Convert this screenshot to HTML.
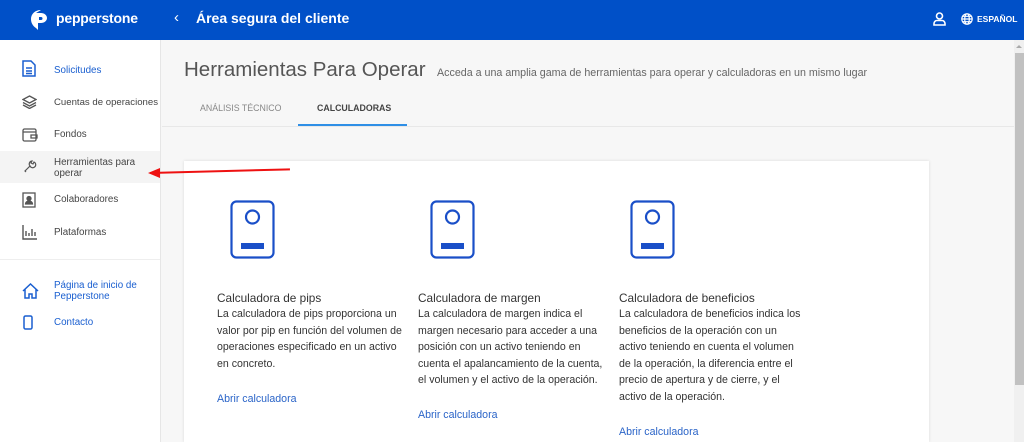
<!DOCTYPE html>
<html style="overflow:hidden"><head><meta charset="utf-8"><style>
*{margin:0;padding:0;box-sizing:border-box}
html,body{width:1024px;height:442px;overflow:hidden}
body{font-family:"Liberation Sans",sans-serif;background:#f7f7f7;position:relative}
.hdr{position:absolute;left:0;top:0;width:1024px;height:40px;background:#0050c8;color:#fff}
.side{position:absolute;left:0;top:40px;width:161px;height:402px;background:#fff;border-right:1px solid #e6e6e6}
.it{position:absolute;left:54px;font-size:9.8px;color:#444;line-height:11px;white-space:nowrap}
.blue{color:#1a5fd0}
.ic{position:absolute;left:22px}
.card{position:absolute;left:184px;top:161px;width:745px;height:281px;background:#fff;box-shadow:0 0 3px rgba(0,0,0,.12)}
.col{position:absolute;top:0;width:195px}
.col h3{font-weight:normal;font-size:11.8px;color:#333;position:absolute;top:130px;left:0;white-space:nowrap}
.col p{position:absolute;top:145px;left:0;font-size:10.6px;line-height:16.6px;color:#333;width:194px}
.col a{position:absolute;font-size:10.6px;color:#2a64c8;white-space:nowrap}
</style></head><body>
<div class="hdr">
 <svg style="position:absolute;left:30px;top:9px" width="22" height="22" viewBox="0 0 22 22"><path d="M11 1C5 1 1 5 1 10c0 4 2 7 5 9l2 2V14h3c3 0 6-2 6-5s-3-5-6-5H6" fill="#fff"/><path d="M9 8h2a1.5 1.5 0 010 3H9z" fill="#0050c8"/></svg>
 <div style="position:absolute;left:56px;top:10px;font-size:14px;font-weight:bold;letter-spacing:-.2px">pepperstone</div>
 <div style="position:absolute;left:174px;top:9px;font-size:15px">&#8249;</div>
 <div style="position:absolute;left:196px;top:10px;font-size:14px;font-weight:bold">Área segura del cliente</div>
 <svg style="position:absolute;left:933px;top:12px" width="13" height="14" viewBox="0 0 13 14" fill="none" stroke="#fff" stroke-width="1.6"><circle cx="6.5" cy="4" r="3"/><path d="M1 13v-1.5a3 3 0 013-3h5a3 3 0 013 3V13z"/></svg>
 <svg style="position:absolute;left:961px;top:13px" width="12" height="12" viewBox="0 0 12 12" fill="none" stroke="#fff" stroke-width="1.2"><circle cx="6" cy="6" r="5.2"/><ellipse cx="6" cy="6" rx="2.3" ry="5.2"/><path d="M1 6h10M2 3.3h8M2 8.7h8"/></svg>
 <div style="position:absolute;left:977px;top:14px;font-size:8.5px;font-weight:bold">ESPAÑOL</div>
</div>
<div class="side">
 <svg class="ic" style="top:20px" width="14" height="17" viewBox="0 0 14 17" fill="none" stroke="#1a5fd0" stroke-width="1.5"><path d="M1 1h8l4 4v11H1z M4 8h6M4 11h6M4 13.5h6"/></svg>
 <div class="it blue" style="top:25px">Solicitudes</div>
 <svg class="ic" style="top:55px" width="15" height="14" viewBox="0 0 15 14" fill="none" stroke="#555" stroke-width="1.3"><path d="M7.5 1L14 4.5 7.5 8 1 4.5z M1 7.5L7.5 11 14 7.5 M1 10L7.5 13.5 14 10"/></svg>
 <div class="it" style="top:57px;font-size:9.6px">Cuentas de operaciones</div>
 <svg class="ic" style="top:87px" width="16" height="15" viewBox="0 0 16 15" fill="none" stroke="#555" stroke-width="1.3"><rect x="1" y="2" width="13" height="12" rx="1.5"/><path d="M1 5h13M9 8h6v3H9z"/></svg>
 <div class="it" style="top:89px">Fondos</div>
 <div style="position:absolute;left:0;top:111px;width:160px;height:32px;background:#f4f4f4"></div>
 <svg class="ic" style="top:119px" width="15" height="15" viewBox="0 0 15 15" fill="none" stroke="#555" stroke-width="1.2"><path d="M3 12l5-5a3 3 0 104-4l-1 2-2-1 1-2a3 3 0 00-2 5L3 12l1 1z"/></svg>
 <div class="it" style="top:117px">Herramientas para<br>operar</div>
 <svg class="ic" style="top:152px" width="15" height="16" viewBox="0 0 15 16" fill="none" stroke="#555" stroke-width="1.3"><rect x="1" y="1" width="12" height="14"/><circle cx="7" cy="6.5" r="2" fill="#555"/><path d="M3.5 12a3.5 3 0 017 0z" fill="#555"/></svg>
 <div class="it" style="top:154px">Colaboradores</div>
 <svg class="ic" style="top:185px" width="15" height="15" viewBox="0 0 15 15" fill="none" stroke="#555" stroke-width="1.4"><path d="M1 0v14h14M4 11V6M7 11V8M10 11V4M13 11V7"/></svg>
 <div class="it" style="top:187px">Plataformas</div>
 <div style="position:absolute;left:0;top:219px;width:160px;height:1px;background:#eee"></div>
 <svg class="ic" style="top:243px" width="17" height="16" viewBox="0 0 17 16" fill="none" stroke="#1a5fd0" stroke-width="1.5"><path d="M1 8L8.5 1 16 8M3 6.5V15h4v-4h3v4h4V6.5"/></svg>
 <div class="it blue" style="top:240px">Página de inicio de<br>Pepperstone</div>
 <svg class="ic" style="top:275px" width="12" height="15" viewBox="0 0 12 15" fill="none" stroke="#1a5fd0" stroke-width="1.5"><rect x="2" y="1" width="8" height="13" rx="1.5"/></svg>
 <div class="it blue" style="top:277px">Contacto</div>
</div>
<div style="position:absolute;left:184px;top:58px;font-size:20.5px;color:#555">Herramientas Para Operar</div>
<div style="position:absolute;left:437px;top:67px;font-size:10.7px;color:#666;white-space:nowrap">Acceda a una amplia gama de herramientas para operar y calculadoras en un mismo lugar</div>
<div style="position:absolute;left:200px;top:103px;font-size:8.8px;color:#888">ANÁLISIS TÉCNICO</div>
<div style="position:absolute;left:317px;top:103px;font-size:8.8px;color:#444;font-weight:bold">CALCULADORAS</div>
<div style="position:absolute;left:298px;top:124px;width:109px;height:2px;background:#2f8fe6"></div>
<div style="position:absolute;left:162px;top:126px;width:852px;height:1px;background:#e8e8e8"></div>
<div class="card">
 <div class="col" style="left:33px">
  <svg style="position:absolute;left:13px;top:39px" width="45" height="59" viewBox="0 0 45 59" fill="none" stroke="#1a4fc8" stroke-width="2.2"><rect x="1.5" y="1.5" width="42" height="56" rx="5"/><circle cx="22.5" cy="17" r="6.5"/><rect x="11" y="43" width="23" height="6" fill="#1a4fc8" stroke="none"/></svg>
  <h3>Calculadora de pips</h3>
  <p>La calculadora de pips proporciona un valor por pip en función del volumen de operaciones especificado en un activo en concreto.</p>
  <a style="top:232px">Abrir calculadora</a>
 </div>
 <div class="col" style="left:234px">
  <svg style="position:absolute;left:12px;top:39px" width="45" height="59" viewBox="0 0 45 59" fill="none" stroke="#1a4fc8" stroke-width="2.2"><rect x="1.5" y="1.5" width="42" height="56" rx="5"/><circle cx="22.5" cy="17" r="6.5"/><rect x="11" y="43" width="23" height="6" fill="#1a4fc8" stroke="none"/></svg>
  <h3>Calculadora de margen</h3>
  <p>La calculadora de margen indica el margen necesario para acceder a una posición con un activo teniendo en cuenta el apalancamiento de la cuenta, el volumen y el activo de la operación.</p>
  <a style="top:248px">Abrir calculadora</a>
 </div>
 <div class="col" style="left:435px">
  <svg style="position:absolute;left:11px;top:39px" width="45" height="59" viewBox="0 0 45 59" fill="none" stroke="#1a4fc8" stroke-width="2.2"><rect x="1.5" y="1.5" width="42" height="56" rx="5"/><circle cx="22.5" cy="17" r="6.5"/><rect x="11" y="43" width="23" height="6" fill="#1a4fc8" stroke="none"/></svg>
  <h3>Calculadora de beneficios</h3>
  <p style="width:186px">La calculadora de beneficios indica los beneficios de la operación con un activo teniendo en cuenta el volumen de la operación, la diferencia entre el precio de apertura y de cierre, y el activo de la operación.</p>
  <a style="top:265px">Abrir calculadora</a>
 </div>
</div>
<div style="position:absolute;left:1014px;top:40px;width:10px;height:402px;background:#f0f0f0"></div>
<div style="position:absolute;left:1016px;top:45px;width:0;height:0;border:3px solid transparent;border-bottom-color:#aaa;border-top:0"></div>
<div style="position:absolute;left:1015px;top:53px;width:9px;height:332px;background:#c1c1c1"></div>
<div style="position:absolute;left:150px;top:172px;width:140px;height:2px;background:#e11;transform:rotate(-1.5deg);transform-origin:left"></div>
<div style="position:absolute;left:148px;top:168px;width:0;height:0;border-right:12px solid #e11;border-top:5px solid transparent;border-bottom:5px solid transparent"></div>
</body></html>
